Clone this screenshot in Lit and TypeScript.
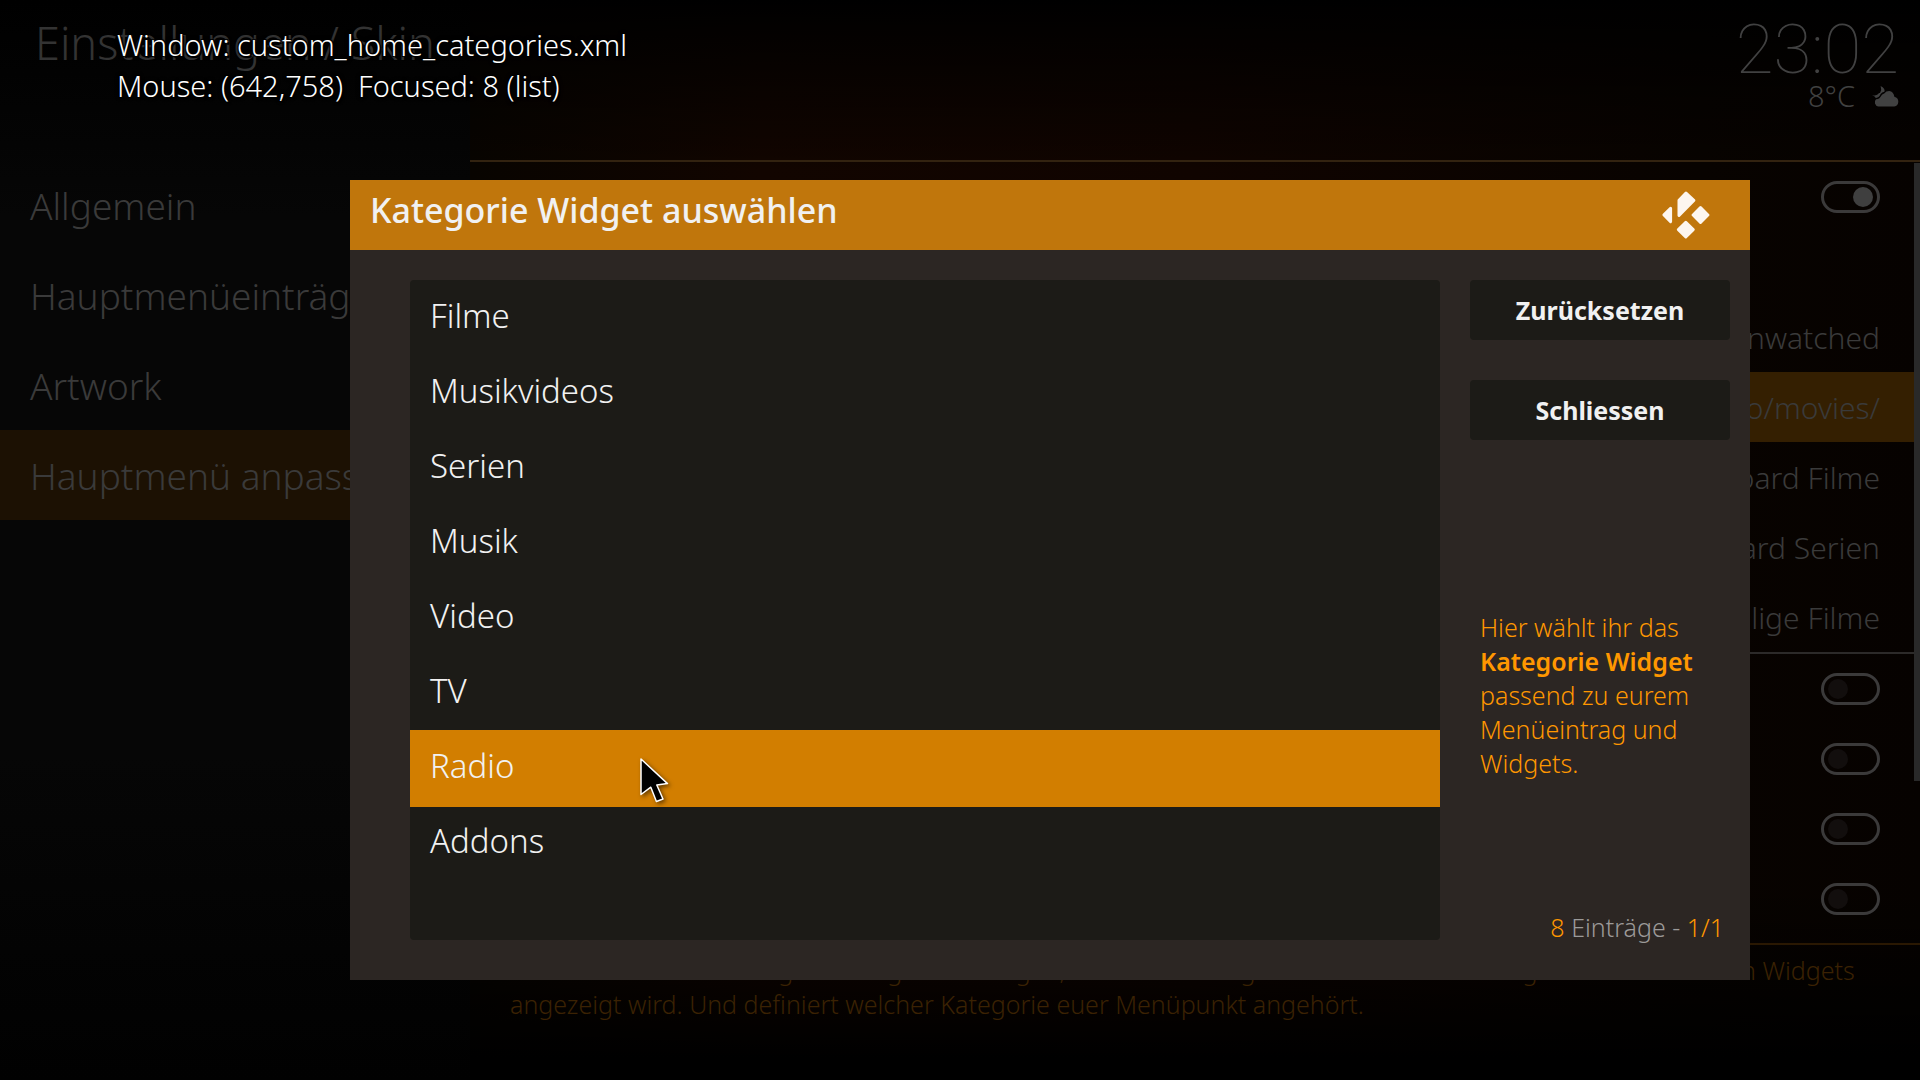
import { LitElement, html, css, svg, nothing } from "lit";
import { customElement, property, state } from "lit/decorators.js";
import { classMap } from "lit/directives/class-map.js";

const shared = css`
  *,
  *::before,
  *::after {
    box-sizing: border-box;
  }
  h1,
  h2,
  p,
  ul {
    margin: 0;
    padding: 0;
  }
  ul {
    list-style: none;
  }
  button {
    border: 0;
    margin: 0;
    font-family: inherit;
    cursor: default;
  }
`;

const kodiLogo = svg`
  <svg class="logo" viewBox="0 0 48 48" width="48" height="48" aria-hidden="true">
    <g fill="#fdf6ef" stroke="#fdf6ef" stroke-width="3" stroke-linejoin="round">
      <path d="M17 9.2 L24 2 L31.8 9.4 L17 24.4 Z" />
      <path d="M8.6 17.2 L2 23.9 L8.6 30.6 Z" />
      <path d="M38.5 16.6 L45.9 24 L38.5 31.4 L31.1 24 Z" />
      <path d="M23.8 31.3 L31.2 38.6 L23.8 46 L16.4 38.6 Z" />
    </g>
  </svg>
`;

const weatherIcon = svg`
  <svg class="weather-icon" viewBox="0 0 27 21" width="27" height="21" aria-hidden="true">
    <path fill="#414141" d="M6.4 20.6 A4.4 4.4 0 0 1 4 13.2 Q7.6 13.4 9.4 9.6 Q10.4 7.6 12.2 7.4 Q14 5 17.2 5 Q21.6 5.4 22.4 10.8 A5 5 0 0 1 22.2 20.6 Z" />
    <path fill="#414141" d="M8.6 0 Q13.6 2.6 12.4 5.8 Q10 6.2 8.6 8 Q7.4 11.6 4 12 Q2.8 11.4 2.4 10.2 L0 9.6 Q5 9.8 7 7 L8 7 Q10 3.6 8.6 0 Z" />
  </svg>
`;

interface SettingRow {
  kind: "toggle" | "value" | "empty";
  label: string;
  value?: string;
  on?: boolean;
  selected?: boolean;
  ruled?: boolean;
}

@customElement("settings-sidebar")
class SettingsSidebar extends LitElement {
  @state() private items = ["Allgemein", "Hauptmenüeinträge", "Artwork", "Hauptmenü anpassen"];
  @state() private active = 3;

  static styles = [
    shared,
    css`
      :host {
        display: block;
        background: linear-gradient(#000, #060606 20%, #060606 70%, #010101);
      }
      .heading {
        height: 160px;
        padding: 13px 0 0 35px;
        font-size: 45px;
        font-weight: 300;
        line-height: 60px;
        color: #333;
        white-space: nowrap;
      }
      .entry {
        display: flex;
        align-items: center;
        width: 100%;
        height: 90px;
        padding: 0 30px;
        background: none;
        color: #3a3a3a;
        font-size: 37px;
        font-weight: 300;
        white-space: nowrap;
        overflow: hidden;
      }
      .active {
        background: #1c1103;
      }
    `,
  ];

  render() {
    return html`
      <h1 class="heading">Einstellungen / Skin</h1>
      <nav>
        <ul>
          ${this.items.map(
            (label, i) => html`<li>
              <button class=${classMap({ entry: true, active: i === this.active })} @click=${() => (this.active = i)}>
                ${label}
              </button>
            </li>`
          )}
        </ul>
      </nav>
    `;
  }
}

@customElement("settings-panel")
class SettingsPanel extends LitElement {
  @state() private rows: SettingRow[] = [
    { kind: "toggle", label: "Aktivieren", on: true },
    { kind: "empty", label: "" },
    { kind: "value", label: "", value: "unwatched" },
    { kind: "value", label: "", value: "video/movies/", selected: true },
    { kind: "value", label: "", value: "Dashboard Filme" },
    { kind: "value", label: "", value: "Dashboard Serien" },
    { kind: "value", label: "", value: "Zufällige Filme", ruled: true },
    { kind: "toggle", label: "Option 1" },
    { kind: "toggle", label: "Option 2" },
    { kind: "toggle", label: "Option 3" },
    { kind: "toggle", label: "Option 4" },
  ];

  static styles = [
    shared,
    css`
      :host {
        display: flex;
        flex-direction: column;
        min-width: 0;
        background: linear-gradient(#000, transparent 16%, transparent 82%, #000 98%),
          linear-gradient(90deg, #080400, #120500 20%, #100400 50%, #080300 85%, #060200);
      }
      .status {
        display: flex;
        flex-direction: column;
        align-items: flex-end;
        height: 162px;
        padding: 15px 21px 0 0;
        border-bottom: 2px solid #332310;
        color: #414141;
      }
      .clock {
        font-family: Roboto, sans-serif;
        font-size: 69px;
        font-weight: 100;
        line-height: 70px;
      }
      .weather {
        display: flex;
        align-items: center;
        gap: 17px;
        font-size: 29px;
        font-weight: 300;
        line-height: 22px;
      }
      .content {
        display: flex;
        align-items: flex-start;
      }
      .rows {
        flex: 1;
      }
      .row {
        display: flex;
        align-items: center;
        justify-content: flex-end;
        height: 70px;
        padding-right: 34px;
        color: #3a3a3a;
        font-size: 30px;
        font-weight: 300;
      }
      .ruled {
        height: 72px;
        border-bottom: 2px solid #2c2a29;
      }
      .selected {
        background: #341f01;
      }
      .toggle {
        appearance: none;
        display: flex;
        align-items: center;
        width: 59px;
        height: 32px;
        margin: 0;
        padding: 0 4px;
        border: 3px solid #3b3a3a;
        border-radius: 16px;
      }
      .toggle::before {
        content: "";
        width: 20px;
        height: 20px;
        border-radius: 10px;
        background: #120e0d;
      }
      .toggle:checked {
        justify-content: flex-end;
      }
      .toggle:checked::before {
        background: #3f3f3f;
      }
      .scrollbar {
        width: 6px;
        height: 618px;
        margin-top: 1px;
        background: #292929;
      }
      .hint {
        margin-top: 9px;
        padding: 8px 40px 0;
        border-top: 2px solid #2a1802;
        color: #3b2203;
        font-size: 25px;
        font-weight: 350;
        line-height: 34px;
      }
    `,
  ];

  private renderRow(row: SettingRow) {
    const classes = classMap({ row: true, selected: !!row.selected, ruled: !!row.ruled });
    return html`<li class=${classes}>
      ${row.kind === "toggle"
        ? html`<input class="toggle" type="checkbox" aria-label=${row.label} .checked=${!!row.on} />`
        : row.kind === "value"
          ? html`<span>${row.value}</span>`
          : nothing}
    </li>`;
  }

  render() {
    return html`
      <header class="status">
        <div class="clock">23:02</div>
        <div class="weather"><span>8°C</span>${weatherIcon}</div>
      </header>
      <div class="content">
        <ul class="rows">
          ${this.rows.map((row) => this.renderRow(row))}
        </ul>
        <div class="scrollbar"></div>
      </div>
      <p class="hint">
        Hier könnt ihr eine Kategorie Widget hinzufügen, wenn im Eintrag in dem aktuellen Eintrag darunter nach den
        Widgets angezeigt wird. Und definiert welcher Kategorie euer Menüpunkt angehört.
      </p>
    `;
  }
}

@customElement("category-dialog")
class CategoryDialog extends LitElement {
  @property({ type: Array }) entries = ["Filme", "Musikvideos", "Serien", "Musik", "Video", "TV", "Radio", "Addons"];
  @state() private focused = 6;

  static styles = [
    shared,
    css`
      :host {
        display: block;
        width: min(1400px, 94%);
        background: #2c2623;
        color: #f1f1f1;
      }
      .titlebar {
        display: flex;
        align-items: center;
        justify-content: space-between;
        height: 70px;
        padding: 0 40px 0 20px;
        background: #c0760c;
      }
      .title {
        padding-bottom: 11px;
        font-size: 34px;
        font-weight: 550;
        line-height: 46px;
      }
      .logo {
        display: block;
      }
      .body {
        display: flex;
        gap: 30px;
        padding: 30px 20px 40px 60px;
      }
      .list {
        flex: 1;
        padding-bottom: 60px;
        border-radius: 4px;
        background: #1c1b17;
      }
      .entry {
        display: block;
        position: relative;
        width: 100%;
        height: 75px;
        padding: 0 20px 4px;
        background: none;
        color: inherit;
        font-size: 33px;
        font-weight: 300;
        text-align: left;
      }
      .focused {
        background: #d27e00;
        box-shadow: 0 2px #d27e00;
      }
      .pointer {
        position: absolute;
        left: 228px;
        top: 25px;
        overflow: visible;
        filter: drop-shadow(2px 2px 2px rgb(0 0 0 / 50%));
      }
      .side {
        display: flex;
        flex-direction: column;
        width: 260px;
      }
      .actions {
        display: grid;
        gap: 40px;
      }
      .action {
        height: 60px;
        border-radius: 4px;
        background: #1c1b17;
        color: inherit;
        font-size: 25px;
        font-weight: 700;
      }
      .help {
        margin: auto 0;
        padding: 34px 10px 0;
        color: #ff9700;
        font-size: 25px;
        font-weight: 350;
        line-height: 34px;
      }
      .help strong {
        font-weight: 650;
      }
      .count {
        padding: 0 6px 1px 0;
        color: #9c9a99;
        font-size: 25px;
        font-weight: 300;
        line-height: 24px;
        text-align: right;
      }
      .number {
        color: #ff9700;
      }
    `,
  ];

  render() {
    return html`
      <header class="titlebar">
        <h2 class="title">Kategorie Widget auswählen</h2>
        ${kodiLogo}
      </header>
      <div class="body">
        <ul class="list">
          ${this.entries.map(
            (label, i) => html`<li>
              <button class=${classMap({ entry: true, focused: i === this.focused })} @click=${() => (this.focused = i)}>
                ${label}
                ${i === this.focused
                  ? html`<svg class="pointer" width="30" height="46" viewBox="0 0 30 46" aria-hidden="true">
                      <path
                        d="M3 4 L29.5 28.6 L18.8 30 L25 44 L18.4 46.5 L12.8 32.2 L3 39.5 Z"
                        fill="#000"
                        stroke="#fff"
                        stroke-width="1.5"
                        stroke-linejoin="round"
                      />
                    </svg>`
                  : nothing}
              </button>
            </li>`
          )}
        </ul>
        <div class="side">
          <div class="actions">
            <button class="action">Zurücksetzen</button>
            <button class="action">Schliessen</button>
          </div>
          <p class="help">
            Hier wählt ihr das <strong>Kategorie Widget</strong> passend zu eurem Menüeintrag und Widgets.
          </p>
          <p class="count"><span class="number">8</span> Einträge - <span class="number">1/1</span></p>
        </div>
      </div>
    `;
  }
}

@customElement("app-root")
class AppRoot extends LitElement {
  static styles = [
    shared,
    css`
      :host {
        display: block;
        position: relative;
        font-family: "Noto Sans", "Open Sans", sans-serif;
        background: #000;
      }
      .page {
        display: grid;
        grid-template-columns: 470px 1fr;
        min-height: 100vh;
      }
      .overlay {
        position: absolute;
        inset: 0;
        display: flex;
        justify-content: center;
        align-items: flex-start;
        padding: 180px 0 0 180px;
      }
      .debug {
        position: absolute;
        left: 117px;
        top: 24px;
        color: #fff;
        font-size: 29px;
        font-weight: 300;
        line-height: 41px;
        text-shadow: -1px -1px #000, 1px -1px #000, -1px 1px #000, 2px 2px #000, 0 0 4px #000;
      }
      .debug p {
        white-space: pre;
      }
    `,
  ];

  render() {
    return html`
      <div class="page">
        <settings-sidebar></settings-sidebar>
        <settings-panel></settings-panel>
      </div>
      <div class="overlay">
        <category-dialog role="dialog" aria-label="Kategorie Widget auswählen"></category-dialog>
      </div>
      <div class="debug">
        <p>Window: custom_home_categories.xml</p>
        <p>Mouse: (642,758)  Focused: 8 (list)</p>
      </div>
    `;
  }
}
